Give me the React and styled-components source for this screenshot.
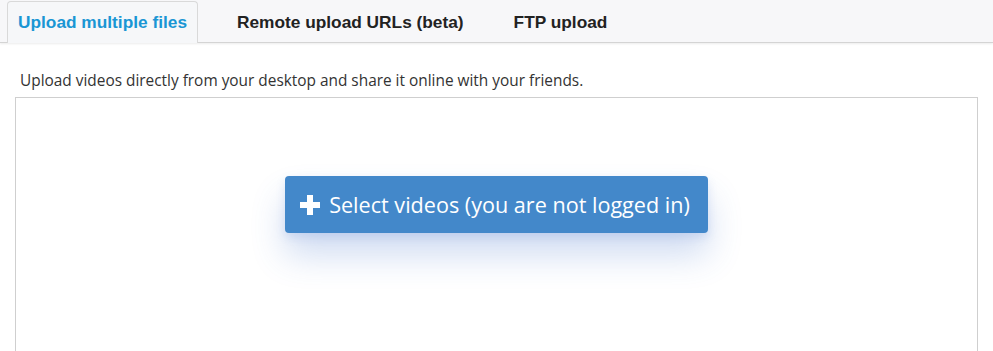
import React from "react";
import styled, { createGlobalStyle } from "styled-components";

const GlobalStyle = createGlobalStyle`
  html, body {
    margin: 0;
    padding: 0;
    background: #fff;
  }
  body {
    font-family: "Open Sans", "Liberation Sans", sans-serif;
    overflow: hidden;
  }
`;

const Page = styled.div`
  width: 993px;
  height: 351px;
  overflow: hidden;
  background: #fff;
`;

const TabBar = styled.ul`
  display: flex;
  align-items: flex-end;
  gap: 28px;
  list-style: none;
  margin: 0;
  padding: 0 0 0 7px;
  height: 43px;
  background: #f7f7f9;
  border-bottom: 1px solid #d4d4d4;
  box-shadow: 0 1px 2px rgba(0, 0, 0, 0.08);
  box-sizing: border-box;
`;

const Tab = styled.li`
  box-sizing: border-box;
  height: 42px;
  margin-bottom: -1px;
  padding: 0 10px;
  display: flex;
  align-items: center;
  font-family: "Liberation Sans", Arial, sans-serif;
  font-weight: bold;
  font-size: 17.3px;
  color: ${(p) => (p.$active ? "#1a96d4" : "#222")};
  background: ${(p) => (p.$active ? "#f6f7f9" : "transparent")};
  border: 1px solid ${(p) => (p.$active ? "#d9d9d9" : "transparent")};
  border-bottom: none;
  border-radius: 4px 4px 0 0;
  cursor: pointer;
`;

const Body = styled.div`
  padding: 27px 15px 0 15px;
`;

const Intro = styled.p`
  margin: 0 0 6px 5px;
  font-family: "Open Sans", sans-serif;
  font-size: 15.4px;
  line-height: 21px;
  color: #333;
`;

const DropZone = styled.div`
  height: 300px;
  border: 1px solid #cfcfcf;
  display: flex;
  justify-content: center;
  align-items: flex-start;
  padding-top: 78px;
  box-sizing: border-box;
`;

const SelectButton = styled.button`
  display: flex;
  align-items: center;
  gap: 9px;
  height: 57px;
  padding: 0 18px 0 15px;
  border: none;
  border-radius: 4px;
  background: #4388ca;
  color: #fff;
  font-family: "Open Sans", sans-serif;
  font-size: 21.6px;
  box-shadow: 0 22px 34px rgba(60, 110, 200, 0.24), 0 4px 10px rgba(60, 110, 200, 0.15);
  cursor: pointer;
`;

const Plus = () => (
  <svg width="20" height="20" viewBox="0 0 20 20">
    <path d="M7 0h6v7h7v6h-7v7H7v-7H0V7h7z" fill="#fff" />
  </svg>
);

export default function App() {
  return (
    <Page>
      <GlobalStyle />
      <TabBar>
        <Tab $active>Upload multiple files</Tab>
        <Tab>Remote upload URLs (beta)</Tab>
        <Tab>FTP upload</Tab>
      </TabBar>
      <Body>
        <Intro>Upload videos directly from your desktop and share it online with your friends.</Intro>
        <DropZone>
          <SelectButton>
            <Plus />
            Select videos (you are not logged in)
          </SelectButton>
        </DropZone>
      </Body>
    </Page>
  );
}
